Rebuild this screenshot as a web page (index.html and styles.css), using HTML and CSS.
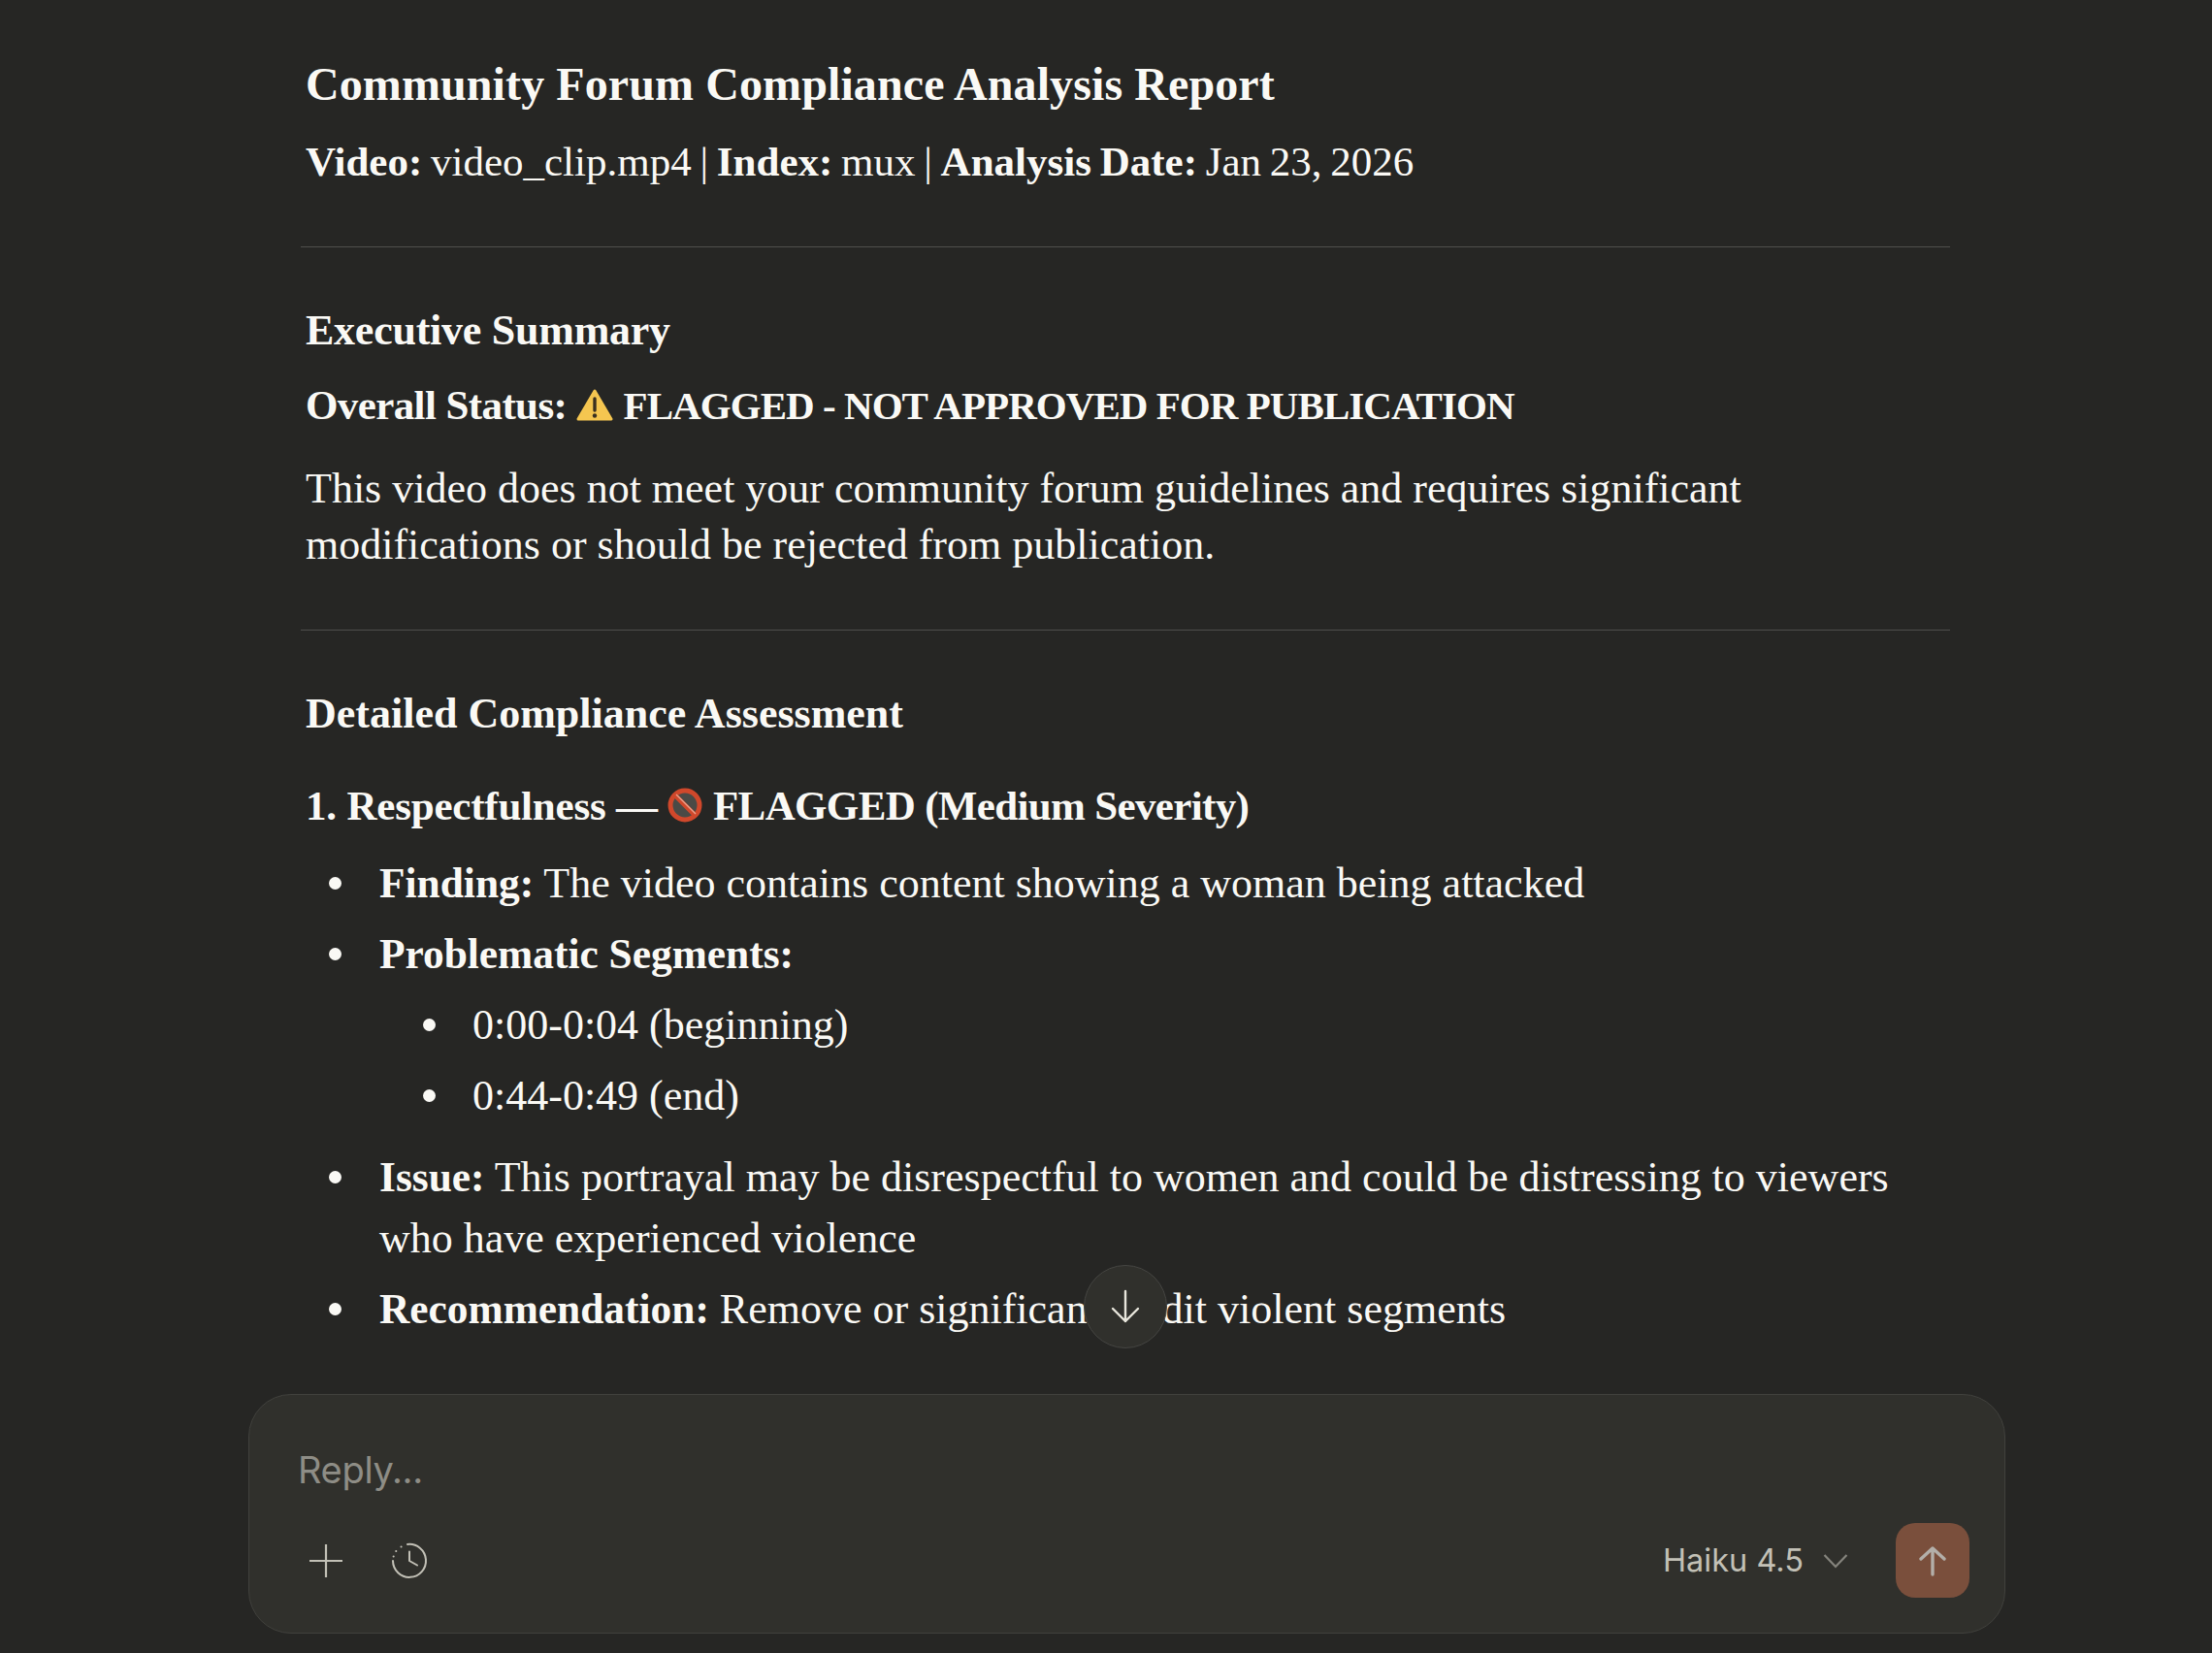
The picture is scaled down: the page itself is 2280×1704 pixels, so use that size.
FILE: index.html
```html
<!DOCTYPE html>
<html lang="en">
<head>
  <meta charset="UTF-8" />
  <title>Community Forum Compliance Analysis Report</title>
  <link rel="stylesheet" href="styles.css">
</head>
<body>
  <div class="page">

    <!-- Report -->
    <div class="thread">
      <h1>Community Forum Compliance Analysis Report</h1>
      <p class="meta"><b>Video:</b> video_clip.mp4 | <b>Index:</b> mux | <b>Analysis Date:</b> Jan 23, 2026</p>
      <hr />
      <h2 class="tight">Executive Summary</h2>
      <p class="status"><b>Overall Status: <svg class="emoji" width="38" height="34" viewBox="0 0 38 34"><path d="M19 2 L36 31 H2 Z" fill="#f5c650" stroke="#f5c650" stroke-width="3" stroke-linejoin="round"/><path d="M19 10 V22" stroke="#3a3020" stroke-width="3.4" stroke-linecap="round"/><circle cx="19" cy="27.5" r="2.2" fill="#3a3020"/></svg> <span class="caps">FLAGGED - NOT APPROVED FOR PUBLICATION</span></b></p>
      <p class="para">This video does not meet your community forum guidelines and requires significant modifications or should be rejected from publication.</p>
      <hr class="second" />
      <h2>Detailed Compliance Assessment</h2>
      <h3>1. Respectfulness — <svg class="emoji" width="36" height="36" viewBox="0 0 36 36"><circle cx="18" cy="18" r="15" fill="#4a4a46" stroke="#d0482b" stroke-width="5"/><path d="M8 8 L28 28" stroke="#d0482b" stroke-width="5"/><path d="M9 7 L29 27" stroke="#e9a58f" stroke-width="1.2"/></svg> <span class="flag">FLAGGED (Medium Severity)</span></h3>
      <ul class="items">
        <li><b>Finding:</b> The video contains content showing a woman being attacked</li>
        <li><b>Problematic Segments:</b>
          <ul class="sub">
            <li>0:00-0:04 (beginning)</li>
            <li>0:44-0:49 (end)</li>
          </ul>
        </li>
        <li><b>Issue:</b> This portrayal may be disrespectful to women and could be distressing to viewers who have experienced violence</li>
        <li><b>Recommendation:</b> Remove or significantly edit violent segments</li>
      </ul>
    </div>

    <!-- Scroll to bottom -->
    <button class="scroll-btn" aria-label="Scroll to bottom">
      <svg width="30" height="36" viewBox="0 0 30 36" fill="none" stroke="#e8e6dc" stroke-width="2.4" stroke-linecap="round" stroke-linejoin="round"><path d="M15 2 V33 M2 20 L15 33 L28 20"/></svg>
    </button>

    <!-- Composer -->
    <div class="composer">
      <div class="placeholder">Reply...</div>
      <div class="toolbar">
        <div class="tools">
          <svg width="36" height="36" viewBox="0 0 36 36" fill="none" stroke="#c2c0b6" stroke-width="2.2"><path d="M18 1 V35 M1 18 H35"/></svg>
          <svg width="38" height="38" viewBox="0 0 38 38" fill="none" stroke="#c2c0b6" stroke-width="2" stroke-linecap="round" stroke-linejoin="round"><path d="M17 2 A17 17 0 1 1 2 19"/><path d="M19 9.5 V19 L27 23.5"/><path d="M10.5 4.4 L10.6 4.4 M5.2 9 L5.3 9 M2.6 14.5 L2.7 14.5"/></svg>
        </div>
        <div class="model">
          <span class="model-name">Haiku 4.5</span>
          <svg class="chevron" width="26" height="16" viewBox="0 0 26 16" fill="none" stroke="#85847d" stroke-width="2.2"><path d="M1.5 2 L13 14 L24.5 2"/></svg>
          <button class="send" aria-label="Send">
            <svg width="28" height="32" viewBox="0 0 28 32" fill="none" stroke="#b3afa9" stroke-width="3.4" stroke-linecap="round" stroke-linejoin="round"><path d="M14 3 V30 M2 14 L14 3 L26 14"/></svg>
          </button>
        </div>
      </div>
    </div>

  </div>
</body>
</html>
```

FILE: styles.css
```css
* {
  margin: 0; padding: 0; box-sizing: border-box;
}
body {
  font-family: "Liberation Serif", serif;
  background: #262624;
  color: #faf9f5;
  overflow: hidden;
}
b, h1, h2, h3 {
  font-weight: 700;
}
.page {
  height: 100vh;
  display: flex;
  flex-direction: column;
  position: relative;
}
.thread {
  flex: 1;
  width: 1700px;
  margin-left: 310px;
  padding-top: 56px;
  overflow: hidden;
  font-size: 44px;
}
.thread h1, .thread h2, .thread h3, .thread p {
  padding-left: 5px;
}
h1 {
  font-size: 48px;
  line-height: 62px;
  letter-spacing: 0.1px;
}
h2 {
  font-size: 44px;
  line-height: 58px;
}
h2.tight {
  letter-spacing: -0.25px;
}
h3 {
  font-size: 43px;
  line-height: 58px;
  letter-spacing: -0.2px;
  margin-top: 37px;
}
.flag {
  letter-spacing: -0.65px;
}
.meta {
  font-size: 43px;
  line-height: 58px;
  word-spacing: -2px;
  margin-top: 20px;
}
hr {
  border: none;
  border-top: 1px solid #4f4f4c;
  margin-top: 58px;
  margin-bottom: 57px;
}
.status {
  font-size: 43px;
  line-height: 58px;
  letter-spacing: -0.6px;
  margin-top: 19px;
}
.caps {
  font-size: 41px;
  letter-spacing: -0.95px;
}
.para {
  line-height: 58px;
  margin-top: 28px;
  width: 1600px;
}
.emoji {
  vertical-align: -3px;
}
.items {
  list-style: none;
  margin-top: 19px;
}
.items li {
  position: relative;
  line-height: 63px;
  margin-bottom: 10px;
  padding-left: 81px;
}
.items b {
  font-size: 43.4px;
}
.items > li::before, .sub > li::before {
  content: "";
  position: absolute;
  left: 29px;
  top: 25px;
  width: 13px;
  height: 13px;
  border-radius: 50%;
  background: #faf9f5;
}
.sub {
  list-style: none;
  margin-top: 10px;
  margin-bottom: 21px;
}
.sub li {
  padding-left: 96px;
}
.sub > li::before {
  left: 45px;
}
.scroll-btn {
  position: absolute;
  left: 1117px;
  top: 1304px;
  width: 86px;
  height: 86px;
  border-radius: 50%;
  background: #30302c;
  border: 1px solid #454542;
  display: flex;
  align-items: center;
  justify-content: center;
}
.composer {
  margin: 0 213px 20px 256px;
  height: 247px;
  background: #30302c;
  border: 1px solid #41413d;
  border-radius: 44px;
  padding: 52px 36px 0 50px;
  font-family: Inter, sans-serif;
}
.placeholder {
  font-size: 38px;
  line-height: 50px;
  letter-spacing: -0.3px;
  color: #8e8d86;
}
.toolbar {
  display: flex;
  justify-content: space-between;
  align-items: center;
  margin-top: 30px;
}
.tools {
  display: flex;
  align-items: center;
  gap: 49px;
  padding-left: 11px;
}
.model {
  display: flex;
  align-items: center;
}
.model-name {
  font-size: 32.5px;
  color: #c2c0b6;
}
.chevron {
  margin-left: 20px;
  margin-right: 49px;
}
.send {
  width: 76px;
  height: 77px;
  background: #7a4f3c;
  border: none;
  border-radius: 20px;
  display: flex;
  align-items: center;
  justify-content: center;
}
```
